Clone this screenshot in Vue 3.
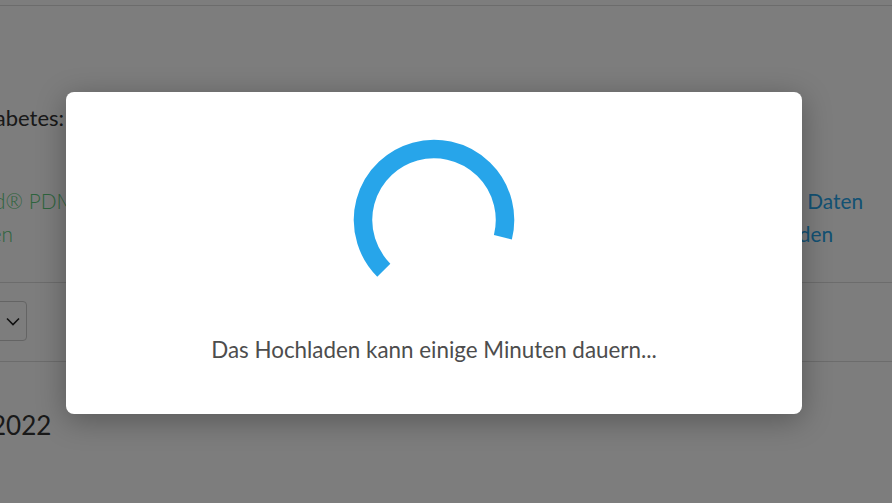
<script setup>
const message = "Das Hochladen kann einige Minuten dauern...";
</script>

<template>
  <div class="page">
    <div class="content">
      <div class="top-bar"></div>
      <h2 class="title">Diabetes:</h2>
      <div class="devices">
        <div class="device green">
          <div class="device-name">Omnipod® PDM</div>
          <div class="device-action">laden</div>
        </div>
        <div class="device blue">
          <div class="device-name">Daten</div>
          <div class="device-action">hochladen</div>
        </div>
      </div>
      <div class="filter-row">
        <div class="select">
          <svg class="chevron" width="14" height="9" viewBox="0 0 14 9">
            <path d="M1 1.5 L7 7.5 L13 1.5" fill="none" stroke="#222" stroke-width="1.6" />
          </svg>
        </div>
      </div>
      <div class="year">2022</div>
    </div>

    <!-- Upload overlay -->
    <div class="backdrop">
      <div class="modal">
        <svg class="spinner" width="180" height="180" viewBox="0 0 180 180">
          <path d="M39.8 140.2 A71 71 0 1 1 158.9 107.2" fill="none" stroke="#27a5ea" stroke-width="18.5" />
        </svg>
        <p class="message">{{ message }}</p>
      </div>
    </div>
  </div>
</template>

<style>
html, body {
  margin: 0;
  overflow: hidden;
}
</style>

<style scoped>
.page {
  position: relative;
  width: 892px;
  height: 503px;
  overflow: hidden;
  background: #fff;
  font-family: Lato, "Noto Sans", sans-serif;
  color: #333;
}

.content {
  display: flex;
  flex-direction: column;
}

.top-bar {
  height: 5px;
  border-bottom: 1px solid #ddd;
}

.title {
  margin: 97px 0 0 -27px;
  font-size: 22px;
  line-height: 30px;
  font-weight: 400;
  color: #333;
}

.devices {
  display: flex;
  justify-content: space-between;
  height: 150px;
  padding-top: 51px;
  box-sizing: border-box;
  border-bottom: 1px solid #ddd;
}

.device {
  font-size: 20.8px;
  line-height: 33px;
}

.green {
  width: 91px;
  margin-left: -78px;
  color: #5ccc7c;
  font-weight: 300;
  white-space: nowrap;
  text-align: right;
}

.green .device-name {
  text-align: left;
}

.blue {
  margin-right: 29px;
  color: #27a5ea;
  text-align: right;
}

.blue .device-action {
  margin-right: 30px;
}

.filter-row {
  height: 79px;
  padding-top: 18px;
  box-sizing: border-box;
  border-bottom: 1px solid #ddd;
}

.select {
  display: flex;
  justify-content: flex-end;
  align-items: center;
  width: 60px;
  height: 40px;
  margin-left: -33px;
  padding: 0 6px;
  box-sizing: border-box;
  border: 1px solid #ccc;
  border-radius: 4px;
}

.year {
  margin: 47px 0 0 -9px;
  font-size: 26px;
  line-height: 32px;
}

.backdrop {
  position: absolute;
  inset: 0;
  display: flex;
  align-items: flex-start;
  background: rgba(0, 0, 0, 0.51);
}

.modal {
  display: flex;
  flex-direction: column;
  align-items: center;
  width: 736px;
  height: 322px;
  margin: 92px 0 0 66px;
  padding-top: 38px;
  box-sizing: border-box;
  background: #fff;
  border-radius: 8px;
  box-shadow: 0 6px 30px rgba(0, 0, 0, 0.3);
}

.spinner {
  display: block;
}

.message {
  margin: 25px 0 0;
  font-size: 22.4px;
  line-height: 30px;
  color: #4d4d4d;
  white-space: nowrap;
}
</style>
